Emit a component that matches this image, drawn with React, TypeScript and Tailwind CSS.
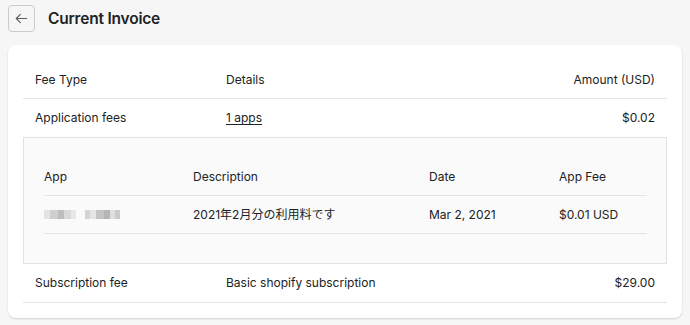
export default function App() {
  const font = { fontFamily: "Inter, 'Noto Sans CJK JP', sans-serif" };

  return (
    <div className="w-[690px] h-[325px] bg-[#f6f6f7] text-[#202223] px-2 pt-[5px]" style={font}>
      <div className="flex items-center h-[27px] gap-[13px]">
        <button className="w-[27px] h-[27px] rounded border border-[#c9cccf] bg-[#f6f6f7] flex items-center justify-center text-[#5c5f62]">
          <svg width="15" height="15" viewBox="0 0 20 20" fill="none" stroke="currentColor" strokeWidth="1.5" strokeLinecap="round" strokeLinejoin="round">
            <path d="M17 10H3.5M8.5 4.5L3 10l5.5 5.5" />
          </svg>
        </button>
        <h1 className="text-[15.5px] font-semibold tracking-[-0.2px]">Current Invoice</h1>
      </div>

      <div className="mt-[13px] bg-white rounded-lg shadow-[0_1px_2px_rgba(0,0,0,0.15)] px-[15px] pt-4 pb-[15px] text-[12px]">
        <div className="flex items-center h-[38px] border-b border-[#e4e5e7] px-3">
          <div className="w-[191px]">Fee Type</div>
          <div className="flex-1">Details</div>
          <div>Amount (USD)</div>
        </div>
        <div className="flex items-center h-[38px] px-3">
          <div className="w-[191px]">Application fees</div>
          <div className="flex-1"><span className="underline underline-offset-2">1 apps</span></div>
          <div>$0.02</div>
        </div>

        <div className="border border-[#e1e3e5] bg-[#fafafa] pl-[20px] pr-[19px] pt-[20px] pb-[29px]">
          <div className="flex items-center h-[38px] border-b border-[#e4e5e7]">
            <div className="w-[149px]">App</div>
            <div className="w-[236px]">Description</div>
            <div className="w-[130px]">Date</div>
            <div className="flex-1">App Fee</div>
          </div>
          <div className="flex items-center h-[38px] border-b border-[#e4e5e7]">
            <div className="w-[149px] flex items-center">
              <div className="flex h-[9px]">
                <div className="w-[6px] bg-[#e3e3e3]" />
                <div className="w-[8px] bg-[#cfcfcf]" />
                <div className="w-[6px] bg-[#bdbdbd]" />
                <div className="w-[7px] bg-[#d9d9d9]" />
                <div className="w-[5px] bg-[#e8e8e8]" />
                <div className="w-[9px] bg-[#fafafa]" />
                <div className="w-[5px] bg-[#d4d4d4]" />
                <div className="w-[6px] bg-[#e5e5e5]" />
                <div className="w-[8px] bg-[#c4c4c4]" />
                <div className="w-[6px] bg-[#b5b5b5]" />
                <div className="w-[5px] bg-[#dedede]" />
                <div className="w-[5px] bg-[#cacaca]" />
              </div>
            </div>
            <div className="w-[236px]">2021年2月分の利用料です</div>
            <div className="w-[130px]">Mar 2, 2021</div>
            <div className="flex-1">$0.01 USD</div>
          </div>
        </div>

        <div className="flex items-center h-[39px] border-b border-[#e4e5e7] px-3">
          <div className="w-[191px]">Subscription fee</div>
          <div className="flex-1">Basic shopify subscription</div>
          <div>$29.00</div>
        </div>
      </div>
    </div>
  );
}
